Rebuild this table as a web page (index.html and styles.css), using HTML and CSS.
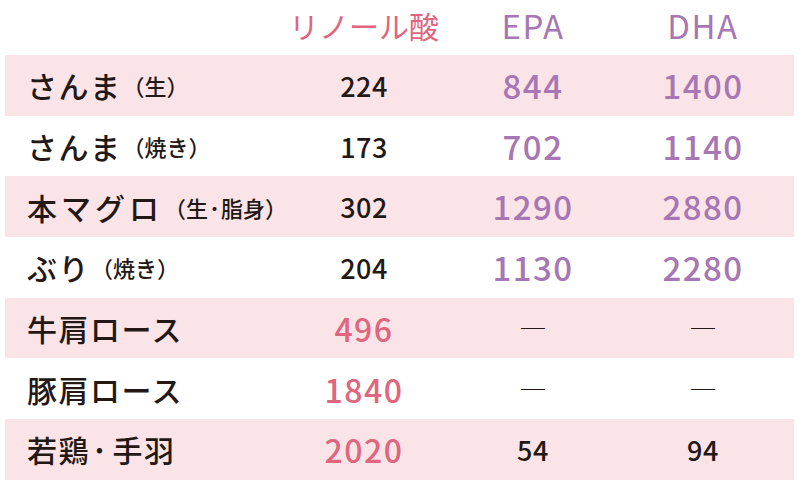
FILE: index.html
```html
<!DOCTYPE html>
<html lang="ja">
<head>
<meta charset="utf-8">
<link rel="stylesheet" href="styles.css">
</head>
<body>
<div class="table">
  <div class="row head">
    <div class="name"></div>
    <div class="cell h-la">リノール酸</div>
    <div class="cell h-o3">EPA</div>
    <div class="cell h-o3">DHA</div>
  </div>
  <div class="row pink">
    <div class="name">さんま<span class="sub">（生）</span></div>
    <div class="cell n-black">224</div>
    <div class="cell n-purple">844</div>
    <div class="cell n-purple">1400</div>
  </div>
  <div class="row">
    <div class="name">さんま<span class="sub">（焼き）</span></div>
    <div class="cell n-black">173</div>
    <div class="cell n-purple">702</div>
    <div class="cell n-purple">1140</div>
  </div>
  <div class="row pink">
    <div class="name"><span class="wide">本マグロ</span><span class="sub">（生<span class="dot">･</span>脂身）</span></div>
    <div class="cell n-black">302</div>
    <div class="cell n-purple">1290</div>
    <div class="cell n-purple">2880</div>
  </div>
  <div class="row">
    <div class="name">ぶり<span class="sub">（焼き）</span></div>
    <div class="cell n-black">204</div>
    <div class="cell n-purple">1130</div>
    <div class="cell n-purple">2280</div>
  </div>
  <div class="row pink">
    <div class="name">牛肩ロース</div>
    <div class="cell n-pink">496</div>
    <div class="cell dash">―</div>
    <div class="cell dash">―</div>
  </div>
  <div class="row">
    <div class="name">豚肩ロース</div>
    <div class="cell n-pink">1840</div>
    <div class="cell dash">―</div>
    <div class="cell dash">―</div>
  </div>
  <div class="row pink">
    <div class="name">若鶏<span class="dot-main">･</span>手羽</div>
    <div class="cell n-pink">2020</div>
    <div class="cell n-black">54</div>
    <div class="cell n-black">94</div>
  </div>
</div>
</body>
</html>
```
FILE: styles.css
```css
html, body {
  margin: 0;
  padding: 0;
  background: #ffffff;
}
body {
  font-family: "Noto Sans CJK JP", "Noto Sans", sans-serif;
  color: #231815;
}
.table {
  margin-left: 5px;
  width: 789px;
}
.row {
  display: grid;
  grid-template-columns: 274px 170px 168px 172px;
  align-items: center;
  height: 60.7px;
}
.row.head {
  height: 55px;
}
.row.pink {
  background: #fbe4e7;
}
.name {
  padding-left: 22px;
  font-size: 30px;
  font-weight: 500;
  line-height: 1;
  letter-spacing: 1.5px;
  white-space: nowrap;
  display: flex;
  align-items: center;
}
.wide {
  letter-spacing: 4px;
}
.sub {
  font-size: 22px;
  font-weight: 500;
  letter-spacing: 0;
  margin-left: 1px;
}
.dot {
  padding: 0 1px;
}
.dot-main {
  padding: 0 4px 0 2px;
}
.cell {
  text-align: center;
  line-height: 1;
}
.h-la {
  font-size: 30px;
  color: #e0657f;
  padding-bottom: 5px;
}
.h-o3 {
  font-size: 33px;
  color: #a677b4;
  letter-spacing: 1.5px;
  padding-bottom: 5px;
}
.n-black {
  font-size: 27px;
  font-weight: 500;
  letter-spacing: 0.5px;
}
.n-purple {
  font-size: 33px;
  color: #a677b4;
  font-weight: 500;
  letter-spacing: 1.5px;
}
.n-pink {
  font-size: 32px;
  color: #e0657f;
  font-weight: 500;
  letter-spacing: 1.5px;
}
.dash {
  font-size: 28px;
  font-weight: 300;
}
```
